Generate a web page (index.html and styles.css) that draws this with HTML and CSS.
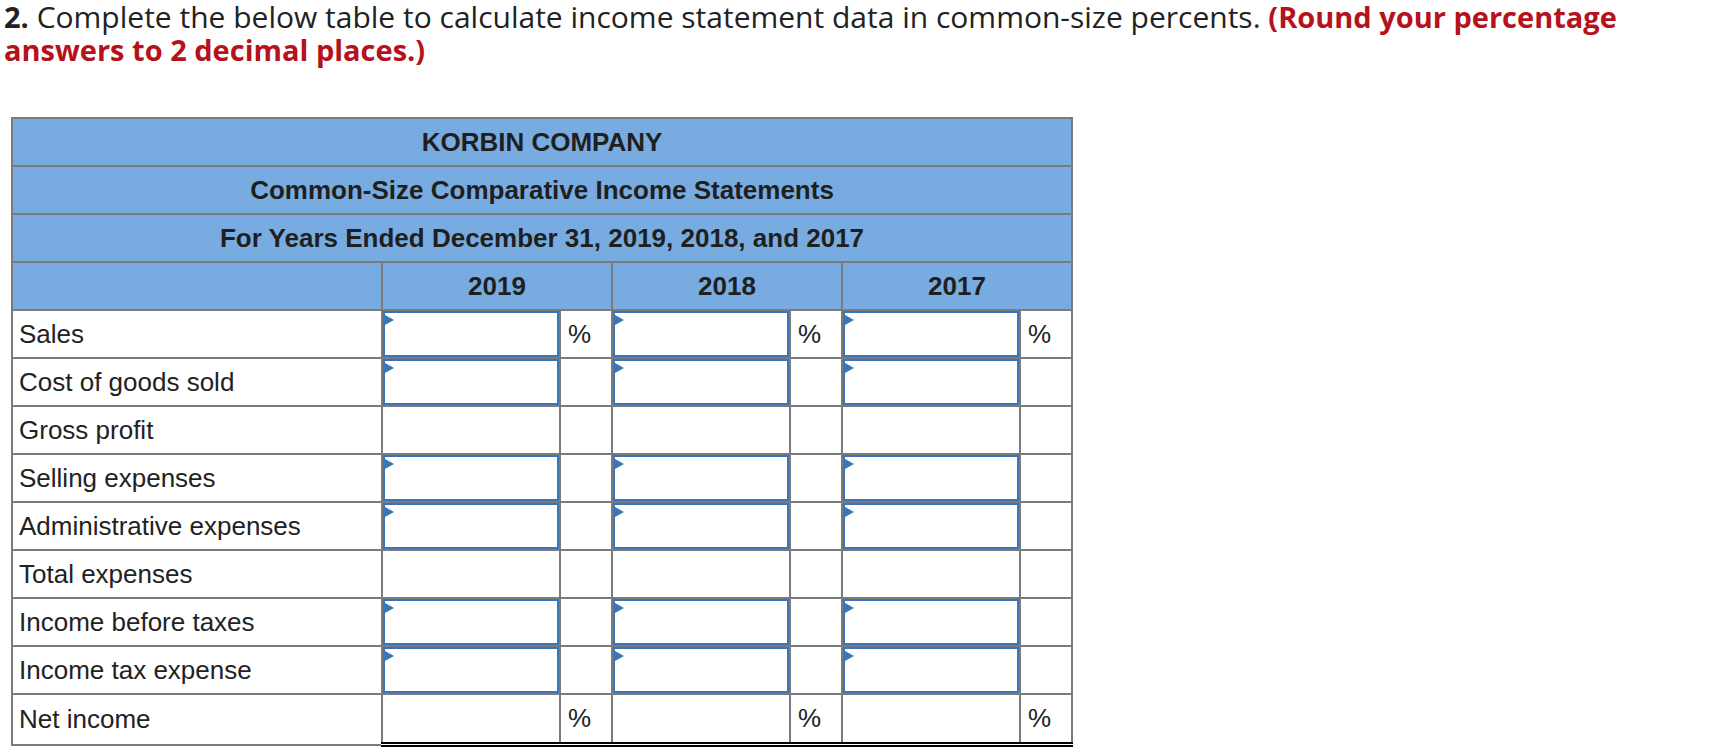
FILE: index.html
```html
<!DOCTYPE html>
<html>
<head>
<meta charset="utf-8">
<link rel="stylesheet" href="styles.css">
</head>
<body>
<p class="prompt"><b class="num">2.</b> Complete the below table to calculate income statement data in common-size percents. <b class="red">(Round your percentage answers to 2 decimal places.)</b></p>

<table class="stmt">
  <colgroup>
    <col class="c-label">
    <col class="c-val">
    <col class="c-pct">
    <col class="c-val">
    <col class="c-pct">
    <col class="c-val">
    <col class="c-pct">
  </colgroup>
  <tr class="hd"><td colspan="7">KORBIN COMPANY</td></tr>
  <tr class="hd"><td colspan="7">Common-Size Comparative Income Statements</td></tr>
  <tr class="hd"><td colspan="7">For Years Ended December 31, 2019, 2018, and 2017</td></tr>
  <tr class="hd"><td></td><td colspan="2">2019</td><td colspan="2">2018</td><td colspan="2">2017</td></tr>

  <tr>
    <td class="lbl">Sales</td>
    <td class="in"><div class="box"></div></td><td class="pct">%</td>
    <td class="in"><div class="box"></div></td><td class="pct">%</td>
    <td class="in"><div class="box"></div></td><td class="pct">%</td>
  </tr>
  <tr>
    <td class="lbl">Cost of goods sold</td>
    <td class="in"><div class="box"></div></td><td class="pct"></td>
    <td class="in"><div class="box"></div></td><td class="pct"></td>
    <td class="in"><div class="box"></div></td><td class="pct"></td>
  </tr>
  <tr class="sum">
    <td class="lbl">Gross profit</td>
    <td class="in"></td><td class="pct"></td>
    <td class="in"></td><td class="pct"></td>
    <td class="in"></td><td class="pct"></td>
  </tr>
  <tr>
    <td class="lbl">Selling expenses</td>
    <td class="in"><div class="box"></div></td><td class="pct"></td>
    <td class="in"><div class="box"></div></td><td class="pct"></td>
    <td class="in"><div class="box"></div></td><td class="pct"></td>
  </tr>
  <tr>
    <td class="lbl">Administrative expenses</td>
    <td class="in"><div class="box"></div></td><td class="pct"></td>
    <td class="in"><div class="box"></div></td><td class="pct"></td>
    <td class="in"><div class="box"></div></td><td class="pct"></td>
  </tr>
  <tr class="sum">
    <td class="lbl">Total expenses</td>
    <td class="in"></td><td class="pct"></td>
    <td class="in"></td><td class="pct"></td>
    <td class="in"></td><td class="pct"></td>
  </tr>
  <tr class="sum">
    <td class="lbl">Income before taxes</td>
    <td class="in"><div class="box"></div></td><td class="pct"></td>
    <td class="in"><div class="box"></div></td><td class="pct"></td>
    <td class="in"><div class="box"></div></td><td class="pct"></td>
  </tr>
  <tr>
    <td class="lbl">Income tax expense</td>
    <td class="in"><div class="box"></div></td><td class="pct"></td>
    <td class="in"><div class="box"></div></td><td class="pct"></td>
    <td class="in"><div class="box"></div></td><td class="pct"></td>
  </tr>
  <tr class="total">
    <td class="lbl">Net income</td>
    <td class="in"></td><td class="pct">%</td>
    <td class="in"></td><td class="pct">%</td>
    <td class="in"></td><td class="pct">%</td>
  </tr>
</table>
</body>
</html>
```

FILE: styles.css
```css
html, body {
  margin: 0;
  padding: 0;
  background: #fff;
}
body {
  padding: 0 4px;
}
.prompt {
  margin: 0;
  padding-top: 0;
  font-family: "Open Sans", Lato, sans-serif;
  font-size: 30px;
  line-height: 33px;
  color: #222;
  width: 1660px;
}
.prompt .num {
  font-size: 29px;
  font-weight: 700;
}
.prompt .red {
  font-size: 29px;
  color: #b5121b;
  font-weight: 700;
}
.stmt {
  margin-top: 51px;
  margin-left: 7px;
  border-collapse: collapse;
  table-layout: fixed;
  width: 1061px;
  font-family: "Liberation Sans", Arial, sans-serif;
  font-size: 26px;
  color: #222;
  border: 2px solid #7b7b7b;
}
.c-label { width: 370px; }
.c-val { width: 178px; }
.c-pct { width: 52px; }
.stmt td {
  border: 2px solid #7b7b7b;
  padding: 0;
  height: 46px;
  vertical-align: middle;
}
.hd td {
  background: #78ace0;
  text-align: center;
  font-weight: 700;
  color: #1f1f1f;
}
.lbl {
  padding-left: 6px !important;
  text-align: left;
}
.pct {
  padding-left: 7px !important;
}
.in {
  position: relative;
}
.box {
  position: relative;
  height: 42px;
  border: 2px solid #3a74b9;
}
.box::before {
  content: "";
  position: absolute;
  left: 0;
  top: 2px;
  border-left: 9px solid #3a74b9;
  border-top: 5px solid transparent;
  border-bottom: 5px solid transparent;
}
.sum .in {
  border-top-color: #000;
}
.total .in,
.total .pct {
  border-top-color: #000;
  border-bottom: 5px double #000;
}
.total td {
  height: 47px;
}
```
